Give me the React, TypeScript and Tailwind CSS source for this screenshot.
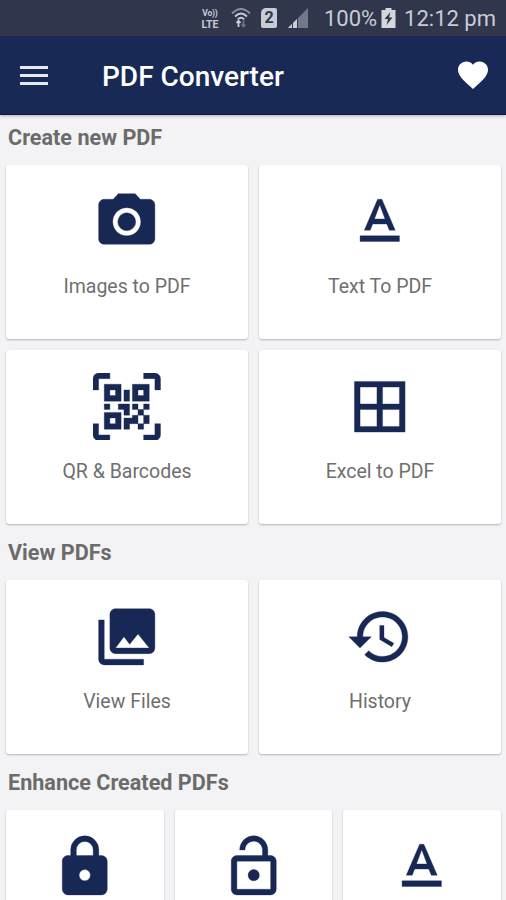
import React from "react";

const icons = {
  camera:
    "M9 2L7.17 4H4c-1.1 0-2 .9-2 2v12c0 1.1.9 2 2 2h16c1.1 0 2-.9 2-2V6c0-1.1-.9-2-2-2h-3.17L15 2H9zm3 15c-2.76 0-5-2.24-5-5s2.24-5 5-5 5 2.24 5 5-2.24 5-5 5zM12 8.8a3.2 3.2 0 1 0 0 6.4a3.2 3.2 0 1 0 0-6.4z",
  text: "M5 17v2h14v-2H5zm4.5-4.2h5l.9 2.2h2.1L12.75 4h-1.5L6.5 15h2.1l.9-2.2zM12 5.98L13.87 11h-3.74L12 5.98z",
  qr: "M4,4H10V10H4V4M20,4V10H14V4H20M14,15H16V13H14V11H16V13H18V11H20V13H18V15H20V18H18V20H16V18H13V20H11V16H14V15M16,15V18H18V15H16M4,20V14H10V20H4M6,6V8H8V6H6M16,6V8H18V6H16M6,16V18H8V16H6M4,11H6V13H4V11M9,11H13V15H11V13H9V11M11,6H13V10H11V6M2,2V6H0V2A2,2 0 0,1 2,0H6V2H2M22,0A2,2 0 0,1 24,2V6H22V2H18V0H22M2,18V22H6V24H2A2,2 0 0,1 0,22V18H2M22,22V18H24V22A2,2 0 0,1 22,24H18V22H22Z",
  grid: "M3 3v18h18V3H3zm8 16H5v-6h6v6zm0-8H5V5h6v6zm8 8h-6v-6h6v6zm0-8h-6V5h6v6z",
  photos:
    "M22 16V4c0-1.1-.9-2-2-2H8c-1.1 0-2 .9-2 2v12c0 1.1.9 2 2 2h12c1.1 0 2-.9 2-2zm-11-4l2.03 2.71L16 11l4 5H8l3-4zM2 6v14c0 1.1.9 2 2 2h14v-2H4V6H2z",
  history:
    "M13 3c-4.97 0-9 4.03-9 9H1l3.89 3.89.07.14L9 12H6c0-3.87 3.13-7 7-7s7 3.13 7 7-3.13 7-7 7c-1.93 0-3.68-.79-4.94-2.06l-1.42 1.42C8.27 19.99 10.51 21 13 21c4.97 0 9-4.03 9-9s-4.03-9-9-9zm-1 5v5l4.28 2.54.72-1.21-3.5-2.08V8H12z",
  lock: "M12,17A2,2 0 0,0 14,15C14,13.89 13.1,13 12,13A2,2 0 0,0 10,15A2,2 0 0,0 12,17M18,8A2,2 0 0,1 20,10V20A2,2 0 0,1 18,22H6A2,2 0 0,1 4,20V10C4,8.89 4.9,8 6,8H7V6A5,5 0 0,1 12,1A5,5 0 0,1 17,6V8H18M12,3A3,3 0 0,0 9,6V8H15V6A3,3 0 0,0 12,3Z",
  unlock:
    "M12 17c1.1 0 2-.9 2-2s-.9-2-2-2-2 .9-2 2 .9 2 2 2zm6-9h-1V6c0-2.76-2.24-5-5-5S7 3.24 7 6h1.9c0-1.71 1.39-3.1 3.1-3.1 1.71 0 3.1 1.39 3.1 3.1v2H6c-1.1 0-2 .9-2 2v10c0 1.1.9 2 2 2h12c1.1 0 2-.9 2-2V10c0-1.1-.9-2-2-2zm0 12H6V10h12v10z",
};

function Card({ icon, label }: { icon: keyof typeof icons; label?: string }) {
  return (
    <div className="flex h-[174px] flex-col items-center rounded-[3px] bg-white pt-[22.5px] shadow-[0_1px_2px_rgba(0,0,0,0.26)]">
      <svg
        viewBox="0 0 24 24"
        fillRule="evenodd"
        className="size-[67.5px] shrink-0 fill-[#182855] stroke-[#182855] stroke-[0.12]"
      >
        <path d={icons[icon]} />
      </svg>
      {label && (
        <span className="mt-5 text-[19.5px] leading-6 whitespace-nowrap text-[#6f6f6f]">{label}</span>
      )}
    </div>
  );
}

function Heading({ children }: { children: React.ReactNode }) {
  return (
    <h2 className="pt-[14px] pb-3 pl-0.5 text-[21.6px] leading-[30px] font-bold whitespace-nowrap text-[#6b6b6c]">
      {children}
    </h2>
  );
}

function StatusBar() {
  return (
    <div className="flex h-9 items-center bg-[#30364c] pr-[10px] pl-[199px] text-[#c9ccd5]">
      <div className="flex w-[22px] flex-col items-center gap-px pt-0.5 font-bold">
        <span className="text-[8.5px] leading-[10px] tracking-[-0.2px] whitespace-nowrap">Vo))</span>
        <span className="text-[10.5px] leading-[12px]">LTE</span>
      </div>
      <svg viewBox="0 0 20 22" className="ml-[10px] h-[22px] w-5 fill-none stroke-[#c9ccd5] stroke-[1.8]">
        <path d="M1 6.5Q10-2.5 19 6.5" strokeOpacity=".6" />
        <path d="M4 9.5Q10 3.5 16 9.5" />
        <path d="M6.8 12.3Q10 9.3 13.2 12.3" />
        <path d="M7.5 20v-6M5.5 16l2-2.4 2 2.4" />
        <path d="M12.5 13.5v6M10.7 17.5l1.8 2 1.8-2" strokeOpacity=".4" />
      </svg>
      <div className="ml-[10px] flex h-5 w-4 items-center justify-center rounded-[2px] rounded-tl-[5px] bg-[#c9ccd5] text-[16px] font-bold text-[#30364c]">
        2
      </div>
      <svg viewBox="0 0 20 20" className="ml-[11px] size-5">
        <path d="M20 0v20H0z" fill="#72788a" />
        <path d="M9 11v9H0z" fill="#c9ccd5" />
        <path d="M4.5 14v6M9.5 9v11" stroke="#30364c" />
      </svg>
      <span className="ml-4 w-[53px] text-[22px] whitespace-nowrap">100%</span>
      <svg viewBox="0 0 14 20" className="ml-[4px] h-5 w-[15px]">
        <path d="M4 0h6v2h4v18H0V2h4z" fill="#d5d7dd" />
        <path d="M9 4L3 11h3.5L5 17l6-7.5H7.5z" fill="#30364c" />
      </svg>
      <span className="ml-auto pt-px text-[22px] whitespace-nowrap">12:12 pm</span>
    </div>
  );
}

export default function App() {
  return (
    <div className="h-[900px] w-[506px] overflow-hidden bg-[#f3f3f5] font-[Roboto,sans-serif]">
      <StatusBar />
      <header className="flex h-[79px] items-center border-b border-[#08154a] bg-[#182955] pr-[15px] pl-5 shadow-[0_1px_3px_rgba(80,50,60,0.35)]">
        <div className="flex w-7 flex-col gap-[5px]">
          <div className="h-[3px] bg-[#e6e8ee]" />
          <div className="h-[3px] bg-[#e6e8ee]" />
          <div className="h-[3px] bg-[#e6e8ee]" />
        </div>
        <h1 className="ml-[54px] pt-[3px] text-[28px] font-medium whitespace-nowrap text-white">PDF Converter</h1>
        <svg viewBox="0 0 24 24" className="ml-auto size-9 fill-white">
          <path d="M12 21.35l-1.45-1.32C5.4 15.36 2 12.28 2 8.5 2 5.42 4.42 3 7.5 3c1.74 0 3.41.81 4.5 2.09C13.09 3.81 14.76 3 16.5 3 19.58 3 22 5.42 22 8.5c0 3.78-3.4 6.86-8.55 11.54L12 21.35z" />
        </svg>
      </header>
      <main className="pr-[5px] pl-1.5">
        <div className="-mt-[6px]">
          <Heading>Create new PDF</Heading>
        </div>
        <div className="grid grid-cols-2 gap-[11px]">
          <Card icon="camera" label="Images to PDF" />
          <Card icon="text" label="Text To PDF" />
          <Card icon="qr" label="QR & Barcodes" />
          <Card icon="grid" label="Excel to PDF" />
        </div>
        <Heading>View PDFs</Heading>
        <div className="grid grid-cols-2 gap-[11px]">
          <Card icon="photos" label="View Files" />
          <Card icon="history" label="History" />
        </div>
        <Heading>Enhance Created PDFs</Heading>
        <div className="grid grid-cols-3 gap-[11px]">
          <Card icon="lock" />
          <Card icon="unlock" />
          <Card icon="text" />
        </div>
      </main>
    </div>
  );
}
